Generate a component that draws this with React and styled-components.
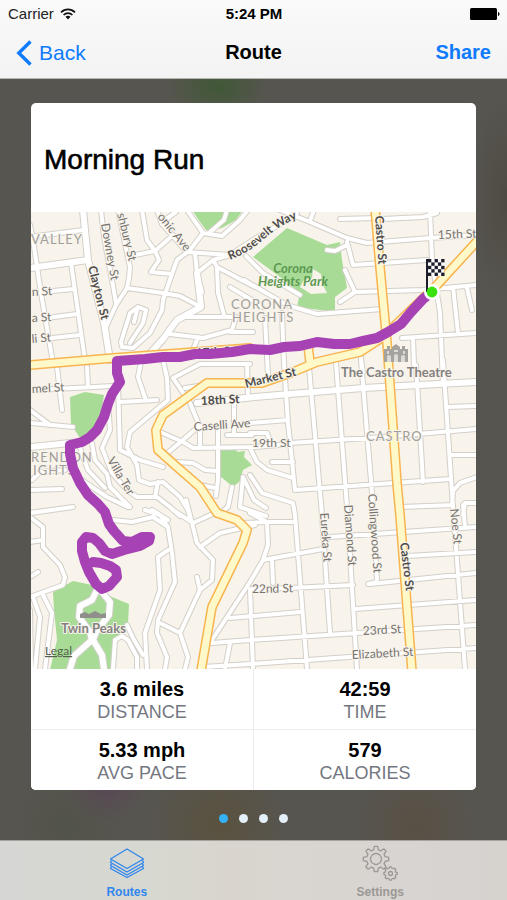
import styled, { createGlobalStyle } from 'styled-components'

const GlobalStyle = createGlobalStyle`
  * {
    box-sizing: border-box;
  }

  body {
    margin: 0;
    font-family: "Liberation Sans", Arial, sans-serif;
    color: #000;
  }

  button {
    padding: 0;
    border: none;
    background: none;
    font-family: inherit;
    cursor: pointer;
  }
`

const Screen = styled.div`
  display: flex;
  flex-direction: column;
  min-height: 100vh;
`

/* Header: status bar and navigation bar */

const Header = styled.header`
  background: linear-gradient(#fafafa, #f3f3f3);
  border-bottom: 1px solid #b5b5b3;
`

const ThreeColumns = styled.div`
  display: grid;
  grid-template-columns: 1fr auto 1fr;
  align-items: center;

  & > :last-child {
    justify-self: end;
  }
`

const StatusBar = styled(ThreeColumns)`
  height: 27px;
  padding: 0 7px 0 8px;
  font-size: 15px;
`

const Carrier = styled.div`
  display: flex;
  align-items: center;
  gap: 6px;
  color: #222;
`

const Clock = styled.time`
  font-size: 15px;
  font-weight: 700;
`

const NavBar = styled(ThreeColumns)`
  height: 51px;
  padding: 0 16px;
`

const NavButton = styled.button`
  display: flex;
  align-items: center;
  gap: 7px;
  justify-self: start;
  color: #0f7bff;
  font-size: ${props => props.$strong ? '20px' : '21px'};
  font-weight: ${props => props.$strong ? 700 : 400};
`

const NavTitle = styled.h1`
  margin: 0;
  font-size: 20px;
  font-weight: 700;
`

/* Content */

const Content = styled.main`
  flex: 1;
  padding: 24px 31px 17px;
  background:
    radial-gradient(ellipse 52px 34px at 43% 8px, #405836, transparent),
    radial-gradient(ellipse 40px 34px at 21% 93%, #584855, transparent),
    radial-gradient(ellipse 70px 70px at 43% 98%, #5a523f, transparent),
    radial-gradient(ellipse 60px 60px at 82% 98%, #595044, transparent),
    radial-gradient(ellipse 60px 60px at 13% 98%, #525349, transparent),
    radial-gradient(ellipse 40px 100px at 100% 120px, #4d4b41, transparent),
    #575550;
`

const Card = styled.article`
  overflow: hidden;
  border-radius: 5px;
  background: #fff;
`

const CardTitle = styled.h2`
  margin: 0;
  padding: 41px 13px 36px;
  font-size: 28px;
  line-height: 32px;
  font-weight: 400;
  -webkit-text-stroke: 0.6px #000;
`

const Stats = styled.dl`
  display: grid;
  grid-template-columns: 1fr 1fr;
  gap: 1px;
  margin: 0;
  background: #ececee;
`

const Stat = styled.div`
  display: flex;
  flex-direction: column-reverse;
  padding: 8px 0 6px;
  background: #fff;
  text-align: center;
`

const StatValue = styled.dd`
  margin: 0;
  font-size: 20px;
  line-height: 24px;
  font-weight: 700;
`

const StatLabel = styled.dt`
  color: #74777f;
  font-size: 18px;
  line-height: 22px;
`

const Pager = styled.div`
  display: flex;
  justify-content: center;
  gap: 11px;
  margin-top: 24px;
`

const Dot = styled.button`
  width: 9px;
  height: 9px;
  border-radius: 50%;
  background: ${props => props.$active ? '#34b1f7' : '#e4f0f9'};
`

/* Tab bar */

const TabBar = styled.nav`
  display: flex;
  height: 60px;
  border-top: 1px solid #a5a39e;
  background: linear-gradient(90deg, #d6d6d4, #d7d8d0 30%, #d9d5ce 45%, #d8d4d1 80%, #d6d3cf);
`

const Tab = styled.a`
  flex: 1;
  display: flex;
  flex-direction: column;
  align-items: center;
  padding-top: 4px;
  color: ${props => props.$active ? '#2f86ee' : '#9b9995'};
  font-size: 12px;
  line-height: 14px;
  font-weight: 700;
  text-decoration: none;

  svg {
    margin-bottom: 4px;
  }
`

/* Map */

const MapSvg = styled.svg`
  display: block;
  width: 100%;
  background: #f8f4ec;
`

const Road = styled.path`
  fill: none;
  stroke-linejoin: round;
  stroke-linecap: round;
  stroke: ${props => props.$color};
  stroke-width: ${props => props.$width}px;
`

const Label = styled.text`
  font-family: Lato, sans-serif;
  font-size: 12px;
  font-weight: ${props => props.$dark ? 700 : 400};
  fill: ${props => props.$dark ? '#4f4d4b' : '#75726f'};
  stroke: #f8f4ec;
  stroke-width: 2px;
  stroke-linejoin: round;
  paint-order: stroke;
`

const District = styled(Label)`
  font-size: 13px;
  letter-spacing: 1px;
  fill: #a19e9a;
`

const Place = styled(Label)`
  font-size: 13px;
  font-weight: 700;
  fill: #84817f;
`

const ParkLabel = styled(Label)`
  font-size: 13px;
  font-style: italic;
  font-weight: 700;
  text-anchor: middle;
  fill: #5d9951;
  stroke: none;
`

const Legal = styled(Label)`
  fill: #55604f;
  stroke: none;
  text-decoration: underline;
`

const parks = [
  'M287 228L327 245L340 242L342 260L347 288L335 297V312L297 307L300 293L280 277L253 257Z',
  'M192 210L200 222L206 230H212L222 228L236 220L243 210Z',
  'M70 397L85 392L104 395L100 420L92 434L80 438L71 424Z',
  'M220 448L234 449L238 452L245 451L244 457L252 465L243 470L240 481L233 487L220 476Z',
  'M53 592L73 581L92 585L112 597L129 604L128 625L115 643L112 670H50L57 640L54 610Z',
]

const streets = [
  // north west
  'M30 225L33 240L40 287L53 363', 'M71 263L85 360', 'M30 237L83 230', 'M43 292L73 289',
  'M47 318L77 314', 'M52 338L80 335', 'M101 210L104 237L112 280L116 303',
  'M118 210L130 267L129 278L127 288L116 305L106 327', 'M127 288L163 293L180 296L197 305',
  'M142 210L147 240L155 251L159 260L151 272L172 274', 'M130 256L155 251L173 235L180 240',
  'M157 210L162 224L187 252', 'M162 222L176 212', 'M187 210L203 233L190 250L177 260L172 274L163 300L162 310L150 333L133 348L122 347L121 342L130 313L138 307L146 310L143 323L130 343',
  'M137 310L134 322', 'M203 233L222 236L240 220L248 210', 'M227 210L224 220L209 233',
  'M187 252L230 255L213 260L197 273', 'M195 253L197 273L202 292', 'M213 260L217 267L255 287',
  'M217 267L218 293L224 315', 'M182 317H236L232 330L203 338L170 334', 'M230 287L255 302L262 307',
  'M230 332H253', 'M198 337L193 350',
  // north
  'M230 255L253 240L275 227L297 213', 'M246 256L263 273L300 295', 'M244 280L287 305L317 314L382 309',
  'M280 210L310 222L347 238L367 243L430 238L477 235', 'M310 221L314 210', 'M340 219L377 218',
  'M382 219L423 217L437 213', 'M430 210L432 260L440 313L443 385', 'M347 242L353 265L427 260',
  'M327 250L335 251L347 245', 'M345 270L355 292L340 302', 'M355 292L423 290L477 285',
  'M402 338L477 333', 'M453 287L458 333', 'M467 288L472 310', 'M413 338L414 365',
  'M265 318L268 375', 'M282 313L284 363', 'M360 353L363 372',
  // centre
  'M284 363L288 423L295 490', 'M309 367L322 515L330 633', 'M336 363L347 507L357 669',
  'M361 360L372 493L377 580', 'M416 365L423 482', 'M443 360L452 493L465 669',
  'M250 423L288 420', 'M290 443L383 437L477 429', 'M447 407L477 406', 'M450 455H477',
  'M295 490L450 479', 'M452 505L453 491L460 483L477 477', 'M401 507L453 505', 'M463 515L465 503H477',
  'M250 433H267L270 442', 'M250 448L257 462L267 470L293 478', 'M272 462H293',
  'M250 475L262 493L293 503L295 515L307 669', 'M250 513L267 522H295', 'M267 522L268 545L263 560L250 582L212 640',
  'M240 523L267 522', 'M263 560L323 549', 'M272 560L273 583', 'M330 537L477 527', 'M407 556L477 552',
  'M377 582L368 584M370 584L477 573', 'M250 589L290 588L353 585', 'M230 618L300 612', 'M355 609L477 600',
  'M212 643L250 640L357 633L477 625', 'M203 667L250 664L477 648', 'M250 590L253 669', 'M463 505L465 527',
  // west
  'M87 367L88 387', 'M57 367L62 410', 'M35 390L113 386', 'M30 423L73 427', 'M30 410L50 425',
  'M118 383L120 450L140 460L163 467', 'M120 402L157 400', 'M141 362L138 377L145 398',
  'M163 360L167 378L168 400L130 432L127 447L137 465L139 480L150 484L163 482L180 497L188 510L190 518',
  'M250 364H200L173 378L190 403L200 427V448', 'M247 364L248 397', 'M165 455L183 440L200 425',
  'M160 432L183 442L193 448L255 447L290 444', 'M177 462L193 463L205 470L217 471', 'M218 430V480L216 496',
  'M200 485L215 488', 'M227 435H252', 'M185 388L205 385', 'M234 400V432', 'M232 487L228 507L220 513',
  'M243 477L240 507L266 516', 'M243 477L254 500L266 508', 'M108 403L110 430L102 448L112 473L127 490L137 497H157L170 507L180 516',
  'M92 443L95 460L107 474L110 487L130 507', 'M80 448L88 470L105 488', 'M77 477L107 497L128 507',
  'M158 482L155 497', 'M152 510L168 520', 'M32 480L40 472L65 470', 'M30 490L62 489', 'M30 513L73 507',
  // south west
  'M30 517L43 527V547L60 565L65 577L63 585L30 597', 'M30 542L43 540', 'M30 577L38 572', 'M33 597L40 617L35 669',
  'M43 595L52 613L45 669', 'M30 610L31 669', 'M113 520L132 522L153 517L168 527L172 553L175 582L158 620L157 633L167 657L165 669',
  'M145 510L160 515L168 527', 'M168 550L158 557L160 590L145 633L147 669', 'M160 623L180 633L200 590L197 577',
  'M180 633L188 657L185 669', 'M186 500L190 515L197 543L213 560L212 580L200 590', 'M173 510L193 523L217 512',
  'M200 547L220 533L255 525', 'M225 669L230 643', 'M113 669L115 640L122 636L128 640L137 657V669',
  'M127 625L134 640L143 655',
]

const avenues = [
  'M83 210L88 260L104 323L110 360', 'M30 268L88 260', 'M197 273L201 307L177 320L163 339L147 357',
  'M197 403L255 397L290 394L363 388L477 382', 'M30 447L70 443',
  'M98 588L92 600L80 606L79 617L90 632L92 640L74 656L70 669', 'M102 592L110 602L109 615L96 632L93 640L102 655L104 669',
]

const highways = [
  'M30 365L113 358L250 348', 'M375 208L380 267L387 343L397 483L400 515L412 671',
  'M480 238L437 285L383 337L360 352L317 362L293 372L262 383H207L163 415L156 430L158 450L177 467L200 487L217 513L237 520L247 530L243 543L212 607L201 671',
  'M308 346L310 362',
]

const runPath = 'M432 292L423 299L411 312L401 324L388 332L377 338L363 341L350 344L334 344L317 342L300 346L284 347L270 350L250 349L232 352L210 354L195 354L180 357L163 357L145 359L117 361L117 373L120 382L112 394L108 404L104 417L97 430L90 437L82 442L70 445L70 454L73 468L80 483L88 495L98 504L105 512L109 524L114 531L123 541L132 542L142 537L150 537L149 541L140 546L124 550L112 554L105 551L99 543L93 538L86 537L82 542L82 551L85 562L89 572L96 584L102 589L109 586L117 577L116 570L110 566L101 563L93 562'

const labels = [
  { text: 'Downey St', x: 101, y: 224, angle: 80 },
  { text: 'shbury St', x: 117, y: 214, angle: 76 },
  { text: 'onic Ave', x: 157, y: 217, angle: 51 },
  { text: 'Clayton St', x: 88, y: 267, angle: 76, dark: true },
  { text: 'n St', x: 32, y: 296, angle: -3 },
  { text: 'a St', x: 32, y: 322, angle: -3 },
  { text: 'li St', x: 32, y: 343, angle: -5 },
  { text: 'Castro St', x: 375, y: 216, angle: 86, dark: true },
  { text: '15th St', x: 438, y: 239, angle: -2 },
  { text: '17th St', x: 196, y: 357, angle: -3, dark: true },
  { text: 'Market St', x: 246, y: 388, angle: -14, dark: true },
  { text: '18th St', x: 201, y: 405, angle: -3, dark: true },
  { text: 'Caselli Ave', x: 194, y: 431, angle: -4 },
  { text: '19th St', x: 252, y: 447 },
  { text: 'mel St', x: 32, y: 393, angle: -3 },
  { text: 'Villa Ter', x: 107, y: 460, angle: 60 },
  { text: 'Eureka St', x: 320, y: 513, angle: 86 },
  { text: 'Diamond St', x: 344, y: 505, angle: 86 },
  { text: 'Collingwood St', x: 368, y: 494, angle: 86 },
  { text: 'Castro St', x: 400, y: 543, angle: 83, dark: true },
  { text: 'Noe St', x: 450, y: 509, angle: 84 },
  { text: '22nd St', x: 252, y: 593, angle: -1 },
  { text: '23rd St', x: 363, y: 635, angle: -3 },
  { text: 'Elizabeth St', x: 352, y: 659, angle: -3 },
]

const districts = [
  { text: 'VALLEY', x: 31, y: 244 },
  { text: 'CORONA', x: 231, y: 309 },
  { text: 'HEIGHTS', x: 232, y: 322 },
  { text: 'CASTRO', x: 366, y: 441 },
  { text: 'RENDON', x: 31, y: 462 },
  { text: 'IGHTS', x: 33, y: 475 },
]

const stats = [
  { label: 'DISTANCE', value: '3.6 miles' },
  { label: 'TIME', value: '42:59' },
  { label: 'AVG PACE', value: '5.33 mph' },
  { label: 'CALORIES', value: '579' },
]

const RoadLayer = ({ paths, color, width }) => (
  <Road d={paths.join('')} $color={color} $width={width} />
)

const FinishFlag = () => (
  <g>
    <circle cx="432" cy="292" r="8" fill="#fff" />
    <rect x="426" y="259" width="2" height="33" fill="#1d1d2b" />
    <rect x="428" y="259" width="16" height="17" fill="#fff" />
    {[0, 1, 2, 3, 4].map(row => [0, 1, 2, 3, 4].map(col => (
      (row + col) % 2 === 0 &&
        <rect key={`${row}-${col}`} x={428 + col * 3.3} y={259 + row * 3.4} width="3.3" height="3.4" fill="#1d1d2b" />
    )))}
    <circle cx="432" cy="292" r="5.4" fill="#3be30e" />
  </g>
)

const RouteMap = () => (
  <MapSvg viewBox="31 212 445 457" role="img" aria-label="Map of the Morning Run route">
    {parks.map(d => <path key={d} d={d} fill="#a8dc96" />)}
    <path d="M313 269L321 274L322 283L327 293L311 294L300 287L304 280L312 278Z" fill="#f8f4ec" />

    <RoadLayer paths={streets} color="#d3cfc9" width={6} />
    <RoadLayer paths={avenues} color="#d3cfc9" width={8} />
    <RoadLayer paths={streets} color="#fff" width={4} />
    <RoadLayer paths={avenues} color="#fff" width={6} />
    <RoadLayer paths={highways} color="#f8b450" width={10} />
    <RoadLayer paths={highways} color="#fff8c8" width={7} />

    {/* landmark icons */}
    <path d="M80 618V614L85 612L89 614L95 611L101 614L106 613V618Z" fill="#918f8c" />
    <g fill="#a5a3a0">
      <path d="M384 362V349H387V346H390V349H392V347L396 344L400 347V349H402V346H405V349H408V362Z" />
      <path d="M387 362V357a2 2 0 0 1 4 0V362M394 362V356a2 2 0 0 1 4 0V362M401 362V357a2 2 0 0 1 4 0V362M387 351H389V354H387ZM394 350H398V352H394ZM403 351H405V354H403Z" fill="#dedbd6" />
    </g>

    {districts.map(({ text, x, y }) => <District key={text} x={x} y={y}>{text}</District>)}
    {labels.map(({ text, x, y, angle = 0, dark }) => (
      <Label key={text + x} $dark={dark} transform={`translate(${x} ${y}) rotate(${angle})`}>{text}</Label>
    ))}
    <path id="roosevelt" d="M230 260Q250 252 264 239T300 217" fill="none" />
    <Label $dark><textPath href="#roosevelt">Roosevelt Way</textPath></Label>
    <ParkLabel x="293" y="273">Corona</ParkLabel>
    <ParkLabel x="293" y="286">Heights Park</ParkLabel>
    <Place x="341" y="377">The Castro Theatre</Place>
    <Place x="61" y="633">Twin Peaks</Place>
    <a href="#legal"><Legal x="45" y="655">Legal</Legal></a>

    <Road d={runPath} $color="#a742b5" $width={10} />
    <FinishFlag />
  </MapSvg>
)

const WifiIcon = () => (
  <svg width="16" height="12" viewBox="0 0 16 12" fill="none" stroke="#111" strokeWidth="1.7">
    <path d="M1 4.4C5 .3 11 .3 15 4.4M3.6 7C6.1 4.5 9.9 4.5 12.4 7" />
    <path d="M5.5 8.8C7 7.4 9 7.4 10.5 8.8L8 11.4Z" fill="#111" stroke="none" />
  </svg>
)

const BatteryIcon = () => (
  <svg width="30" height="12" viewBox="0 0 30 12">
    <rect width="27" height="12" rx="1.5" />
    <path d="M28 4C30 4.4 30 7.6 28 8Z" />
  </svg>
)

const BackIcon = () => (
  <svg width="16" height="26" viewBox="0 0 16 26" fill="none" stroke="currentColor" strokeWidth="3.4">
    <path d="M14.5 1.5L2.8 13L14.5 24.5" />
  </svg>
)

const LayersIcon = () => (
  <svg width="36" height="36" viewBox="0 0 36 36" fill="none" stroke="currentColor" strokeWidth="1.3" strokeLinejoin="round">
    <path d="M18 4L34.5 14L18 23.5L1.5 14Z" />
    <path d="M2.5 15.4L1.5 17.5L18 27L34.5 17.5L33.5 15.4M2.5 18.8L1.5 20.5L18 30L34.5 20.5L33.5 18.8M2.5 21.8L1.5 23.5L18 32.5L34.5 23.5L33.5 21.8" />
  </svg>
)

// Outline of a gear with evenly spaced teeth
const gear = (cx, cy, inner, outer, teeth) => {
  const step = (Math.PI * 2) / teeth
  const profile = [[-0.32, inner], [-0.17, outer], [0.17, outer], [0.32, inner]]
  const points = []
  for (let i = 0; i < teeth; i++) {
    profile.forEach(([offset, radius]) => {
      const angle = (i + offset) * step - Math.PI / 2
      points.push(`${(cx + radius * Math.cos(angle)).toFixed(2)} ${(cy + radius * Math.sin(angle)).toFixed(2)}`)
    })
  }
  return `M${points.join('L')}Z`
}

const GearsIcon = () => (
  <svg width="36" height="36" viewBox="0 0 36 36" fill="none" stroke="currentColor" strokeWidth="1.3" strokeLinejoin="round">
    <path d={gear(14, 14, 9.4, 12.8, 8)} />
    <circle cx="14" cy="14" r="5.5" />
    <path d={gear(28.5, 28.5, 5.5, 6.7, 8)} />
    <circle cx="28.5" cy="28.5" r="2" />
  </svg>
)

const App = () => {
  return (
    <Screen>
      <GlobalStyle />
      <Header>
        <StatusBar>
          <Carrier>Carrier <WifiIcon /></Carrier>
          <Clock>5:24 PM</Clock>
          <BatteryIcon />
        </StatusBar>
        <NavBar>
          <NavButton><BackIcon />Back</NavButton>
          <NavTitle>Route</NavTitle>
          <NavButton $strong>Share</NavButton>
        </NavBar>
      </Header>

      <Content>
        <Card>
          <CardTitle>Morning Run</CardTitle>
          <RouteMap />
          <Stats>
            {stats.map(({ label, value }) => (
              <Stat key={label}>
                <StatLabel>{label}</StatLabel>
                <StatValue>{value}</StatValue>
              </Stat>
            ))}
          </Stats>
        </Card>
        <Pager>
          {[1, 2, 3, 4].map(page => (
            <Dot key={page} $active={page === 1} aria-label={`Page ${page}`} />
          ))}
        </Pager>
      </Content>

      <TabBar>
        <Tab href="#routes" $active><LayersIcon />Routes</Tab>
        <Tab href="#settings"><GearsIcon />Settings</Tab>
      </TabBar>
    </Screen>
  )
}

export default App
